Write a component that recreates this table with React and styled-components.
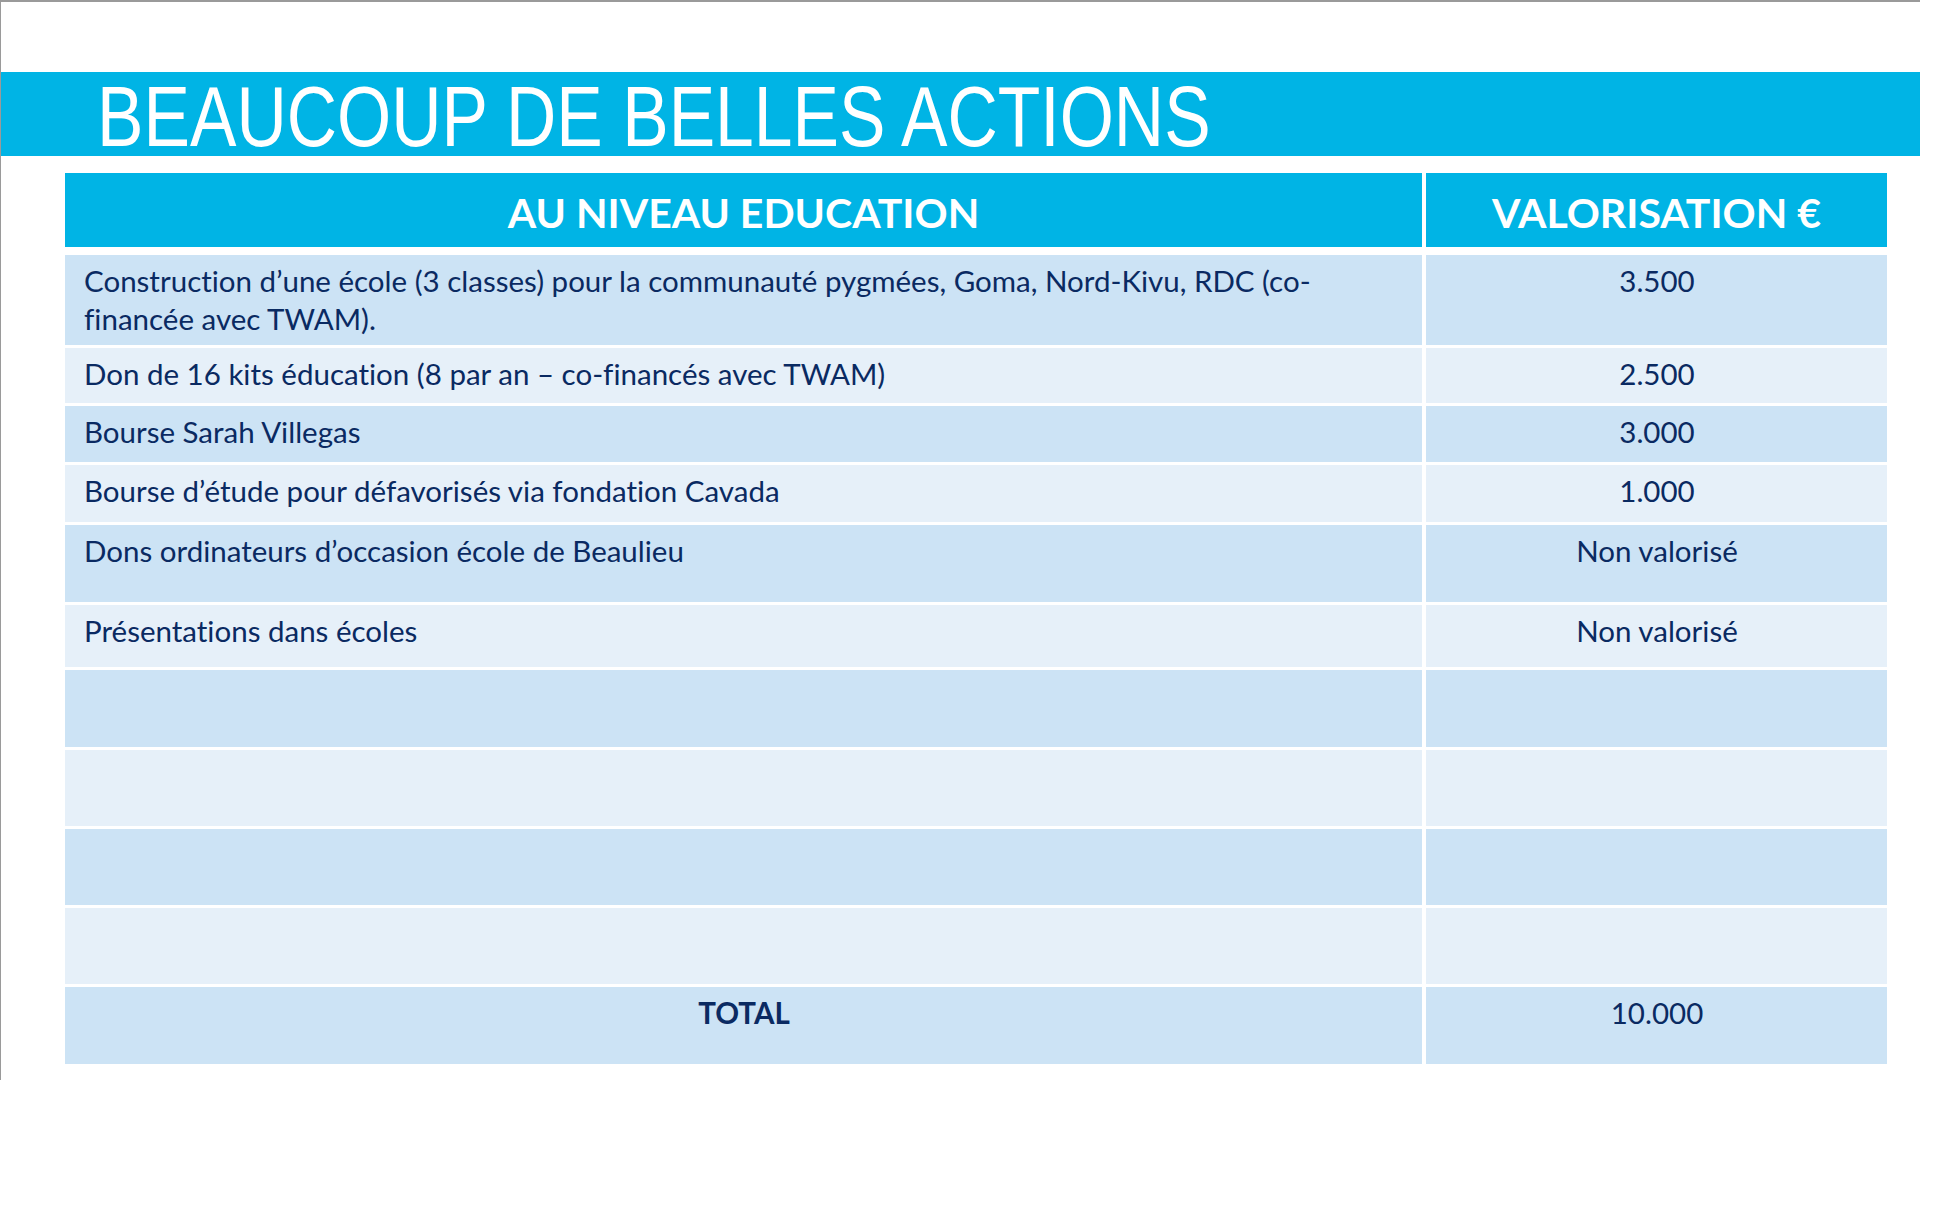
import React from 'react';
import styled, { createGlobalStyle } from 'styled-components';

const GlobalStyle = createGlobalStyle`
  html, body {
    margin: 0;
    padding: 0;
    background: #ffffff;
  }
  body {
    font-family: Lato, 'Open Sans', sans-serif;
    font-variant-ligatures: none;
  }
`;

const Slide = styled.div`
  width: 1920px;
  height: 1080px;
  box-sizing: border-box;
  border-top: 2px solid #9a9a9a;
  border-left: 1px solid #9a9a9a;
  padding-top: 70px;
  background: #ffffff;
`;

const TitleBand = styled.div`
  height: 84px;
  box-sizing: border-box;
  background: #00b4e5;
  padding: 5px 0 0 96px;
`;

const Title = styled.h1`
  margin: 0;
  width: 1400px;
  font-family: 'Liberation Sans', Arial, sans-serif;
  font-weight: 400;
  font-size: 86px;
  line-height: 79px;
  color: #ffffff;
  white-space: nowrap;
  transform: scaleX(0.81);
  transform-origin: left center;
`;

const Table = styled.div`
  margin: 17px 0 0 64px;
  width: 1822px;
  display: flex;
  flex-direction: column;
  gap: 3px;
`;

const Row = styled.div`
  display: grid;
  grid-template-columns: 1357px 461px;
  column-gap: 4px;
  height: ${(props) => props.$h}px;
  margin-bottom: ${(props) => (props.$head ? 5 : 0)}px;
`;

const HeadCell = styled.div`
  background: #00b4e5;
  color: #ffffff;
  font-weight: 700;
  font-size: 41px;
  display: flex;
  align-items: center;
  justify-content: center;
  padding-top: 4px;
  box-sizing: border-box;
`;

const Cell = styled.div`
  background: ${(props) => (props.$alt ? '#e6f0f9' : '#cce3f5')};
  color: #0a2a62;
  font-size: 29.5px;
  line-height: 38px;
  padding: 7px 18px 0 19px;
  box-sizing: border-box;
  text-align: ${(props) => (props.$center ? 'center' : 'left')};
  font-weight: ${(props) => (props.$bold ? 700 : 400)};
`;

const rows = [
  {
    h: 90,
    label: (
      <>
        Construction d’une école (3 classes) pour la communauté pygmées, Goma, Nord-Kivu, RDC (co-
        <br />
        financée avec TWAM).
      </>
    ),
    value: '3.500',
  },
  { h: 55, label: 'Don de 16 kits éducation (8 par an – co-financés avec TWAM)', value: '2.500' },
  { h: 56, label: 'Bourse Sarah Villegas', value: '3.000' },
  { h: 57, label: 'Bourse d’étude pour défavorisés via fondation Cavada', value: '1.000' },
  { h: 77, label: 'Dons ordinateurs d’occasion école de Beaulieu', value: 'Non valorisé' },
  { h: 62, label: 'Présentations dans écoles', value: 'Non valorisé' },
  { h: 77, label: '', value: '' },
  { h: 76, label: '', value: '' },
  { h: 76, label: '', value: '' },
  { h: 76, label: '', value: '' },
];

function App() {
  return (
    <>
      <GlobalStyle />
      <Slide>
        <TitleBand>
          <Title>BEAUCOUP DE BELLES ACTIONS</Title>
        </TitleBand>
        <Table>
          <Row $h={74} $head>
            <HeadCell>AU NIVEAU EDUCATION</HeadCell>
            <HeadCell>VALORISATION €</HeadCell>
          </Row>
          {rows.map((row, i) => (
            <Row key={i} $h={row.h}>
              <Cell $alt={i % 2 === 1}>{row.label}</Cell>
              <Cell $alt={i % 2 === 1} $center>
                {row.value}
              </Cell>
            </Row>
          ))}
          <Row $h={77}>
            <Cell $center $bold>
              TOTAL
            </Cell>
            <Cell $center>10.000</Cell>
          </Row>
        </Table>
      </Slide>
    </>
  );
}

export default App;
